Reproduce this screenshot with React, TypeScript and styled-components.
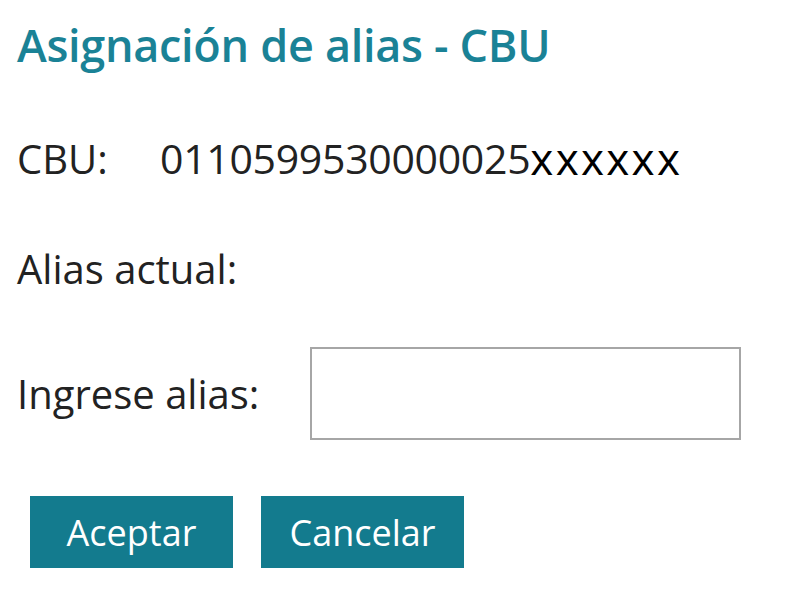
import React from "react";
import styled, { createGlobalStyle } from "styled-components";

const Global = createGlobalStyle`
  html, body { margin: 0; padding: 0; background: #ffffff; }
  body { font-family: "Open Sans", "Noto Sans", sans-serif; color: #222; }
`;

const Page = styled.div`
  width: 800px;
  height: 592px;
  box-sizing: border-box;
  padding-left: 17px;
  display: flex;
  flex-direction: column;
  overflow: hidden;
`;

const Title = styled.h1`
  margin: 0;
  height: 90px;
  line-height: 90px;
  font-size: 45px;
  font-weight: 600;
  color: #1a8296;
  letter-spacing: -0.3px;
`;

const Row = styled.div<{ $top: number; $height: number }>`
  margin-top: ${(p) => p.$top}px;
  height: ${(p) => p.$height}px;
  display: flex;
  align-items: center;
  font-size: 40px;
  color: #222;
`;

const Label = styled.span<{ $width?: number }>`
  width: ${(p) => (p.$width ? `${p.$width}px` : "auto")};
  flex: none;
`;

const Digits = styled.span`
  font-size: 41px;
  letter-spacing: -0.3px;
`;

const Masked = styled.span`
  font-size: 44px;
  color: #000;
  font-weight: 500;
  letter-spacing: 2.3px;
`;

const AliasInput = styled.input`
  box-sizing: border-box;
  width: 431px;
  height: 93px;
  border: 2px solid #a6a6a6;
  background: #fff;
  outline: none;
  font-size: 32px;
  padding: 0 12px;
`;

const Buttons = styled.div`
  margin-top: 56px;
  margin-left: 13px;
  display: flex;
  gap: 28px;
`;

const Button = styled.button`
  width: 203px;
  height: 72px;
  border: none;
  background: #137b8e;
  color: #fff;
  font-family: "Open Sans", "Noto Sans", sans-serif;
  font-size: 36px;
  cursor: pointer;
  padding: 0;
`;

export default function App() {
  return (
    <>
      <Global />
      <Page>
        <Title>Asignación de alias - CBU</Title>
        <Row $top={45} $height={46}>
          <Label $width={143}>CBU:</Label>
          <Digits>0110599530000025</Digits>
          <Masked>xxxxxx</Masked>
        </Row>
        <Row $top={64} $height={46}>
          <Label>Alias actual:</Label>
        </Row>
        <Row $top={56} $height={93}>
          <Label $width={293}>Ingrese alias:</Label>
          <AliasInput type="text" />
        </Row>
        <Buttons>
          <Button>Aceptar</Button>
          <Button>Cancelar</Button>
        </Buttons>
      </Page>
    </>
  );
}
